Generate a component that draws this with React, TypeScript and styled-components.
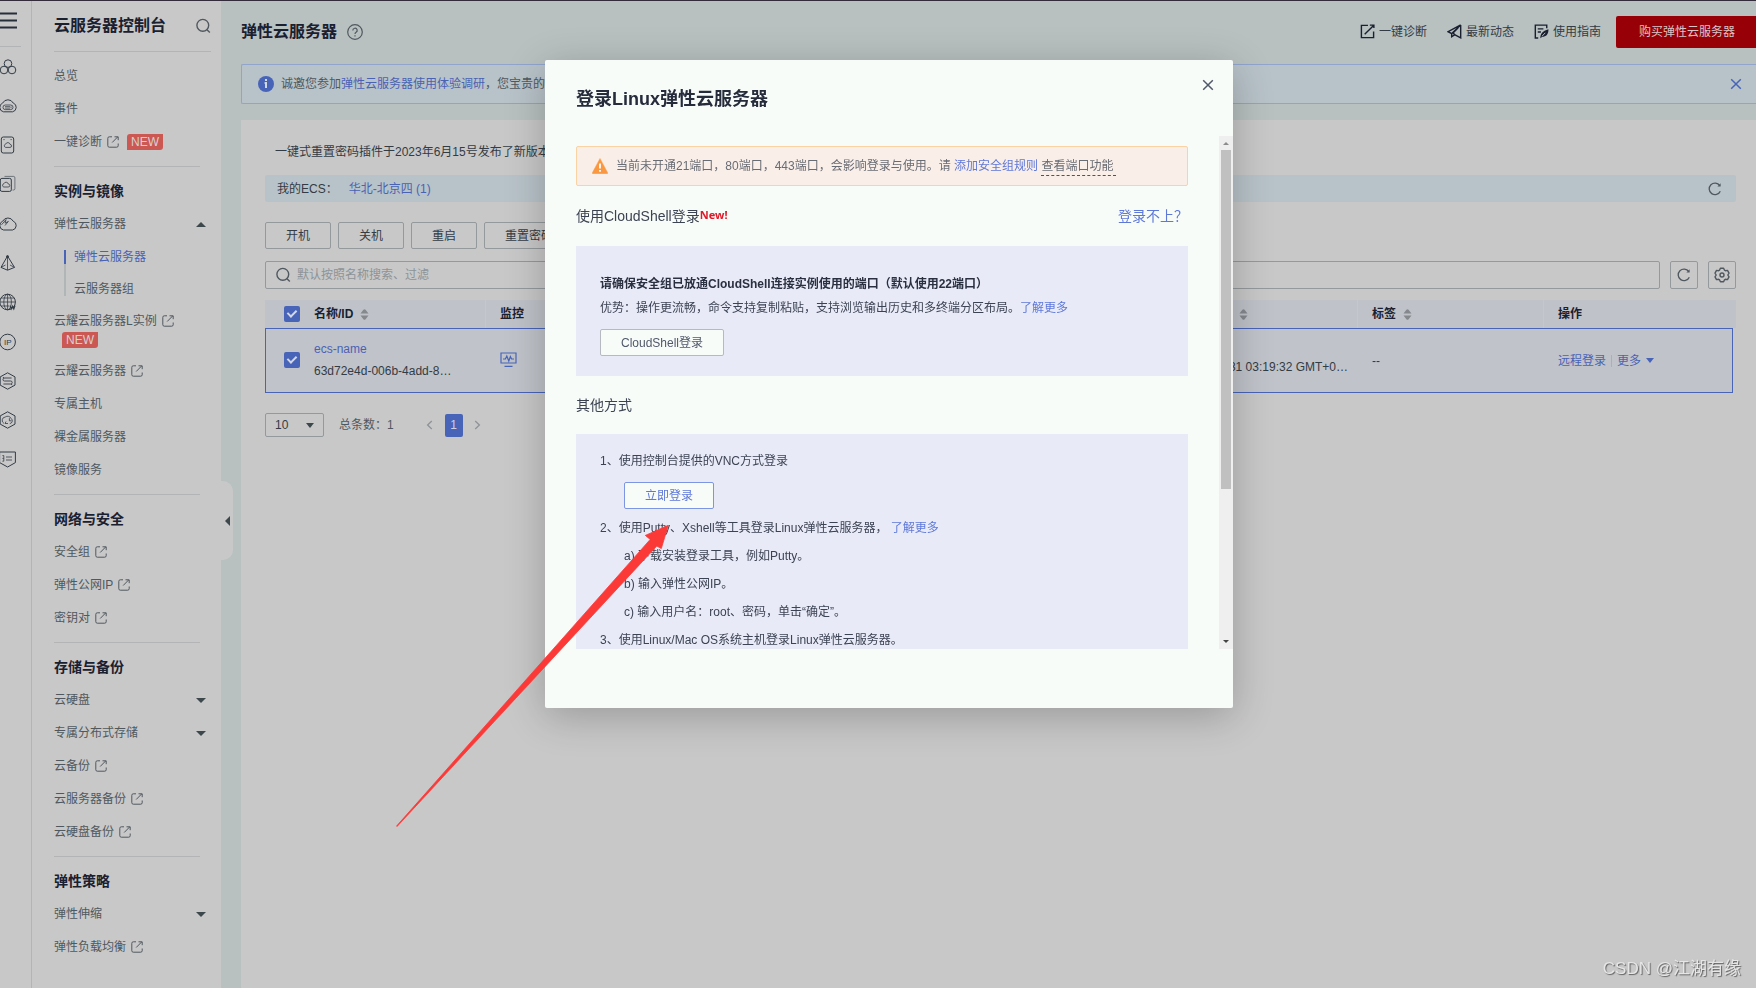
import React from 'react';
import styled, { createGlobalStyle } from 'styled-components';

const c = {
  surface: '#c8c8c8',
  page: '#b8c0c0',
  tint: '#b8c3c9',
  strong: '#1a2030',
  text: '#333b45',
  muted: '#50585f',
  faint: '#8d9397',
  line: '#b2b4b5',
  border: '#94999c',
  link: '#4a62b4',
  accent: '#4864b8',
  modal: '#f8fcf9',
  box: '#e8eaf8',
  modalText: '#3c4352',
  modalLink: '#5e78d8',
};

const GlobalStyle = createGlobalStyle`
  *, *::before, *::after { box-sizing: border-box; }
  body {
    margin: 0;
    background: ${c.surface};
    font: 12px/20px "Liberation Sans", "Noto Sans CJK SC", sans-serif;
    color: ${c.text};
  }
  button, input, select { font: inherit; color: inherit; margin: 0; }
  button { cursor: pointer; }
  a { text-decoration: none; color: inherit; }
  h1, h2, h3, p, ul, ol { margin: 0; padding: 0; font-size: inherit; font-weight: inherit; list-style: none; }
  svg { display: block; flex: none; }
`;

const Shell = styled.div`
  display: flex;
  min-height: 100vh;
  border-top: 1px solid #332b3a;
  overflow: hidden;
`;

/* ---------- icon rail ---------- */

const Rail = styled.nav`
  flex: none;
  width: 32px;
  border-right: 1px solid ${c.line};
`;

const IconButton = styled.button<{ $color?: string }>`
  display: flex;
  align-items: center;
  justify-content: center;
  padding: 0;
  border: 0;
  background: none;
  color: ${(p) => p.$color ?? c.muted};
`;

const MenuButton = styled(IconButton)`
  width: 21px;
  height: 46px;
  padding-bottom: 6px;
  justify-content: flex-start;
  border-bottom: 1px solid ${c.line};
`;

const RailList = styled.ul`
  display: grid;
  grid-auto-rows: 1fr;
  height: 432px;
  overflow: hidden;
`;

const RailLink = styled.a`
  display: flex;
  align-items: center;
  height: 100%;
  margin-left: -1px;
  color: #333c46;
`;

/* ---------- side navigation ---------- */

const Side = styled.aside`
  position: relative;
  flex: none;
  width: 189px;
  padding-left: 22px;
`;

const SideTitle = styled.header`
  display: flex;
  align-items: center;
  justify-content: space-between;
  height: 51px;
  margin-right: 10px;
  border-bottom: 1px solid ${c.line};
  color: ${c.strong};
  h1 { font-size: 16px; font-weight: bold; }
`;

const Section = styled.section`
  margin-right: 21px;
  padding: 8px 0 7px;
  & + & { border-top: 1px solid ${c.line}; }
`;

const SectionTitle = styled.h2`
  font-size: 14px;
  font-weight: bold;
  line-height: 33px;
  color: ${c.strong};
`;

const SideLink = styled.a`
  display: flex;
  flex-wrap: wrap;
  align-items: center;
  column-gap: 5px;
  line-height: 33px;
  color: ${c.muted};
  svg { margin-bottom: 2px; }
`;

const Caret = styled.span<{ $up?: boolean; $small?: boolean }>`
  margin-left: auto;
  margin-right: -6px;
  border: ${(p) => (p.$small ? 4 : 5)}px solid transparent;
  border-bottom-width: ${(p) => (p.$up ? 5 : 0)}px;
  border-top-width: ${(p) => (p.$up ? 0 : 5)}px;
  border-${(p) => (p.$up ? 'bottom' : 'top')}-color: #3c484c;
`;

const NewTag = styled.span<{ $below?: boolean }>`
  height: 16px;
  margin: ${(p) => (p.$below ? '-6px 0 7px 8px' : '0 0 2px 3px')};
  padding: 0 4px;
  border-radius: 3px 0 3px 0;
  background: #cc5854;
  color: #d8d0d0;
  line-height: 16px;
`;

const SubList = styled.ul`
  margin-left: 10px;
  padding: 0;
`;

const SubLink = styled.a<{ $active?: boolean }>`
  position: relative;
  display: block;
  padding-left: 10px;
  line-height: 32px;
  color: ${(p) => (p.$active ? c.link : c.muted)};
  &::before {
    content: '';
    position: absolute;
    left: 0;
    top: ${(p) => (p.$active ? 9 : -9)}px;
    bottom: 9px;
    width: 2px;
    background: ${(p) => (p.$active ? c.accent : '#b0b6b6')};
  }
`;

const Collapse = styled.button`
  position: absolute;
  z-index: 1;
  left: 100%;
  top: 480px;
  display: flex;
  align-items: center;
  width: 12px;
  height: 79px;
  padding: 0 0 0 4px;
  border: 0;
  border-radius: 0 10px 10px 0;
  background: ${c.surface};
  &::before {
    content: '';
    border: 5px solid transparent;
    border-left-width: 0;
    border-right-color: #3c484c;
  }
`;

/* ---------- main area ---------- */

const Main = styled.main`
  display: flex;
  flex: 1;
  flex-direction: column;
  min-width: 0;
  padding-left: 20px;
  background: ${c.page};
`;

const TopBar = styled.header`
  display: flex;
  align-items: center;
  height: 63px;
  padding-bottom: 2px;
  h2 { font-size: 16px; font-weight: bold; color: ${c.strong}; margin-right: 10px; }
`;

const TopLinks = styled.nav`
  display: flex;
  gap: 20px;
  margin-left: auto;
  margin-right: 15px;
`;

const TopLink = styled.a`
  display: flex;
  align-items: center;
  gap: 4px;
  color: ${c.text};
  svg { color: ${c.strong}; }
`;

const BuyButton = styled.button`
  width: 140px;
  height: 32px;
  padding: 0 0 0 23px;
  border: 0;
  border-radius: 2px 0 0 2px;
  background: #980008;
  color: #d8c4c6;
  text-align: left;
`;

const Notice = styled.div`
  display: flex;
  align-items: center;
  height: 40px;
  padding: 0 14px 0 16px;
  border: 1px solid #90a4cc;
  border-right: 0;
  border-radius: 2px 0 0 2px;
  background: ${c.tint};
  color: ${c.muted};
  white-space: nowrap;
  p { margin: 0 auto 0 7px; line-height: 20px; }
`;

const TextLink = styled.a<{ $modal?: boolean }>`
  color: ${(p) => (p.$modal ? c.modalLink : c.link)};
`;

const Panel = styled.section`
  flex: 1;
  margin-top: 16px;
  padding: 22px 20px 0 24px;
  background: ${c.surface};
`;

const Tip = styled.p`
  padding-left: 10px;
  line-height: 20px;
`;

const Region = styled.div`
  display: flex;
  align-items: center;
  gap: 11px;
  height: 27px;
  margin-top: 13px;
  padding: 0 14px 0 12px;
  border-radius: 2px;
  background: ${c.tint};
  button { margin-left: auto; }
`;

const Actions = styled.div`
  display: flex;
  gap: 7px;
  margin-top: 20px;
`;

const OutlineButton = styled.button`
  height: 27px;
  padding: 0 20px;
  border: 1px solid ${c.border};
  border-radius: 2px;
  background: none;
  white-space: nowrap;
  line-height: 24px;
`;

const SearchRow = styled.div`
  display: flex;
  gap: 10px;
  margin-top: 12px;
`;

const SearchBox = styled.label`
  display: flex;
  flex: 1;
  align-items: center;
  gap: 6px;
  height: 28px;
  padding-left: 9px;
  border: 1px solid ${c.border};
  border-radius: 2px;
  color: ${c.muted};
  input {
    flex: 1;
    padding: 0;
    border: 0;
    background: none;
    outline: 0;
  }
  input::placeholder { color: ${c.faint}; opacity: 1; }
`;

const SquareButton = styled(IconButton)`
  width: 28px;
  height: 28px;
  border: 1px solid ${c.border};
  border-radius: 2px;
`;

const TableWrap = styled.div`
  margin-top: 11px;
  padding-right: 3px;
`;

const Table = styled.table`
  width: 100%;
  table-layout: fixed;
  border-spacing: 0;
  text-align: left;
  white-space: nowrap;

  th, td { padding: 0 0 0 14px; overflow: hidden; }
  th:first-child, td:first-child { padding-left: 19px; }
  th:nth-child(2), td:nth-child(2) { padding-left: 0; }
  th {
    height: 28px;
    background: #bfc3c9;
    border-right: 1px solid #c5c8cb;
    font-weight: bold;
    color: ${c.strong};
  }
  th:first-child, th:last-child { border-right: 0; }
  th:last-child { box-shadow: 3px 0 #bfc3c9; overflow: visible; }
  tbody tr { background: #c0c4ca; outline: 1px solid ${c.accent}; outline-offset: -1px; }
  td { height: 65px; }
  td:nth-child(-n + 3) { padding-bottom: 2px; }
`;

const Col = styled.col<{ $w?: number }>`
  width: ${(p) => (p.$w ? `${p.$w}px` : 'auto')};
`;

const Check = styled.input`
  display: block;
  position: relative;
  appearance: none;
  width: 16px;
  height: 16px;
  border-radius: 2px;
  background: ${c.accent};
  &:checked::after {
    content: '';
    position: absolute;
    left: 5px;
    top: 2px;
    width: 6px;
    height: 9px;
    border: solid #d4d8e4;
    border-width: 0 2px 2px 0;
    transform: rotate(45deg);
  }
`;

const HeadCell = styled.span`
  display: flex;
  align-items: center;
  gap: 7px;
`;

const NameCell = styled.div`
  line-height: 22px;
`;

const TimeCell = styled.div`
  margin-left: -14px;
  padding: 12px 10px 0 0;
  text-align: right;
`;

const OpCell = styled.div`
  display: flex;
  align-items: center;
  gap: 5px;
  color: ${c.link};
  i { width: 1px; height: 12px; background: #acb0b5; }
  span { margin: 0; border-top-color: ${c.accent}; }
`;

const Pager = styled.div`
  display: flex;
  align-items: center;
  margin-top: 20px;
  color: ${c.muted};
`;

const PageSize = styled.label`
  display: flex;
  align-items: center;
  width: 59px;
  height: 24px;
  margin-right: 15px;
  border: 1px solid ${c.border};
  border-radius: 2px;
  color: ${c.text};
  select {
    appearance: none;
    flex: 1;
    height: 22px;
    min-width: 0;
    padding: 0 0 0 9px;
    border: 0;
    background: none;
    outline: 0;
  }
  span { margin: 0 9px 0 0; pointer-events: none; }
`;

const PageNav = styled.nav`
  display: flex;
  align-items: center;
  gap: 10px;
  margin-left: 31px;
`;

const PageNumber = styled.button`
  width: 18px;
  height: 23px;
  padding: 0;
  border: 0;
  border-radius: 2px;
  background: ${c.accent};
  color: #c8d0e4;
`;

/* ---------- dialog ---------- */

const Backdrop = styled.div`
  position: fixed;
  inset: 0;
  z-index: 2;
  display: flex;
  align-items: flex-start;
  justify-content: center;
  padding: 60px 0 0 22px;
`;

const Dialog = styled.section`
  width: 688px;
  padding-bottom: 59px;
  border-radius: 2px;
  background: ${c.modal};
  box-shadow: 0 8px 40px rgba(0, 0, 0, 0.24);
  color: ${c.modalText};
`;

const DialogHead = styled.header`
  display: flex;
  align-items: flex-start;
  justify-content: space-between;
  height: 76px;
  padding: 19px 19px 0 31px;
  h2 { padding-top: 8px; font-size: 18px; line-height: 24px; font-weight: bold; color: #262c3c; }
`;

const DialogBody = styled.div`
  display: flex;
  height: 513px;
`;

const Scroller = styled.div`
  flex: 1;
  min-width: 0;
  padding: 10px 31px 0;
  overflow: hidden;
`;

const ScrollBar = styled.div`
  display: flex;
  flex-direction: column;
  align-items: center;
  width: 14px;
  padding: 6px 0;
  background: #efefef;
`;

const ScrollArrow = styled.span<{ $down?: boolean }>`
  border: 3px solid transparent;
  border-bottom-width: ${(p) => (p.$down ? 0 : 3)}px;
  border-top-width: ${(p) => (p.$down ? 3 : 0)}px;
  border-bottom-color: #8c8c8c;
  border-top-color: #444;
  margin-top: ${(p) => (p.$down ? 'auto' : 0)};
`;

const Thumb = styled.div`
  width: 10px;
  height: 339px;
  margin-top: 5px;
  background: #c0c0c0;
`;

const Warning = styled.div`
  display: flex;
  align-items: center;
  gap: 8px;
  height: 40px;
  padding-left: 15px;
  border: 1px solid #fbd2a4;
  border-radius: 2px;
  background: #f9eee8;
  color: #686c74;
  white-space: nowrap;
`;

const PortHelp = styled.a`
  padding: 0 3px 2px 0;
  border-bottom: 1px dashed #4a5468;
`;

const GroupTitle = styled.div<{ $h: number }>`
  display: flex;
  align-items: center;
  height: ${(p) => p.$h}px;
  font-size: 14px;
  h3 { line-height: 20px; }
  a { margin-left: auto; }
`;

const NewMark = styled.strong`
  margin-bottom: 3px;
  font: bold 11px/14px "Noto Sans", sans-serif;
  color: #e01828;
`;

const Box = styled.div<{ $lead: number; $top: number }>`
  padding: ${(p) => p.$top}px 24px 20px;
  background: ${c.box};
  line-height: ${(p) => p.$lead}px;
  white-space: nowrap;
  strong { color: #2a3040; }
`;

const Steps = styled.ol`
  padding-left: 24px;
`;

const DialogButton = styled.button<{ $primary?: boolean }>`
  display: block;
  height: 27px;
  margin: ${(p) => (p.$primary ? '7px 0 5px 24px' : '9px 0 0')};
  padding: 0 20px;
  border: 1px solid ${(p) => (p.$primary ? '#7c96e4' : '#b6bac0')};
  border-radius: 2px;
  background: ${c.modal};
  color: ${(p) => (p.$primary ? c.modalLink : '#50586a')};
  line-height: 24px;
`;

const ArrowOverlay = styled.svg`
  position: fixed;
  z-index: 3;
  left: calc(50% - 482px);
  top: 525px;
  pointer-events: none;
`;

const Watermark = styled.div`
  position: fixed;
  right: 15px;
  bottom: 7px;
  z-index: 3;
  font-size: 17px;
  line-height: 24px;
  color: #e6e6e6;
  text-shadow: 1px 1px 1px #606060;
`;

/* ---------- icons ---------- */

type IconProps = { size?: number; w?: number; box?: number; children: React.ReactNode };
const Icon = ({ size = 16, w = 1, box = 16, children }: IconProps) => (
  <svg width={size} height={size} viewBox={`0 0 ${box} ${box}`} fill="none" stroke="currentColor" strokeWidth={w} aria-hidden="true">
    {children}
  </svg>
);

const SearchIcon = () => (
  <Icon w={1.4}>
    <circle cx="7.8" cy="7.3" r="5.9" />
    <path d="M12 11.7 14.8 14.5" />
  </Icon>
);
const ExternalIcon = () => (
  <Icon size={12} box={12}>
    <path d="M5 .8H2.3A1.5 1.5 0 0 0 .8 2.3v7.4a1.5 1.5 0 0 0 1.5 1.5h7.4a1.5 1.5 0 0 0 1.5-1.5V7.5M5.2 6.5 10.6 1M7.5.8h3.7v3.4" />
  </Icon>
);
const RefreshIcon = () => (
  <Icon size={14} box={14} w={1.3}>
    <path d="M12.3 9.2A5.8 5.8 0 1 1 11.8 3.6" />
    <path d="M12.6 1.2V4.6H9.4Z" fill="currentColor" stroke="none" />
  </Icon>
);
const CloseIcon = () => (
  <Icon size={12} box={12} w={1.5}>
    <path d="M1.2 1.2 10.8 10.8M10.8 1.2 1.2 10.8" />
  </Icon>
);
const SortIcon = () => (
  <svg width="9" height="11" viewBox="0 0 9 11" fill="#85898e" aria-hidden="true">
    <path d="M.5 4.6 3.4.8Q4.5-.2 5.6.8L8.5 4.6ZM.5 6.4 3.4 10.2Q4.5 11.2 5.6 10.2L8.5 6.4Z" />
  </svg>
);
const Cloudlet = ({ x, y }: { x: number; y: number }) => (
  <path d={`M${x} ${y}h4.4a1.5 1.5 0 0 0 .1-3 2.3 2.3 0 0 0-4.4-.3A1.7 1.7 0 0 0 ${x} ${y}Z`} strokeWidth=".8" />
);

const railIcons: [string, React.ReactNode][] = [
  ['服务列表', <><circle cx="9" cy="5.6" r="3.8" /><circle cx="5" cy="12" r="3.8" /><circle cx="13" cy="12" r="3.8" /></>],
  ['云服务器', <><path d="M4.5 14.8A4.6 4.6 0 0 1 3.7 6 5.9 5.9 0 0 1 14.2 6 4.6 4.6 0 0 1 13.6 14.8Z" /><rect x="4" y="8" width="10" height="4.6" rx="2.3" strokeWidth=".8" /><path d="M6 9.6h5M6 11.1h5M12 9.4v1.8" strokeWidth=".7" /></>],
  ['裸金属', <><rect x="2.3" y="1" width="12.4" height="16" rx="2" /><Cloudlet x={6.6} y={11.4} /><path d="M4.5 3.6h1M11.6 3.6h1" /></>],
  ['镜像', <><rect x="1.3" y="3.4" width="11" height="13" rx="1.6" /><path d="M5.5 1.4h9a1.4 1.4 0 0 1 1.4 1.4v10.8a1.4 1.4 0 0 1-1.4 1.4h-1" opacity=".6" /><Cloudlet x={4.8} y={12} /></>],
  ['函数', <><path d="M4.5 15A4.6 4.6 0 0 1 3.7 6.2 5.9 5.9 0 0 1 14.2 6.2 4.6 4.6 0 0 1 13.6 15Z" /><path d="M2.5 9.8 7 4.6 6 8.2 9.4 6.4 6 10.5" strokeWidth=".8" /></>],
  ['网络', <><path d="M8.5 2 2 13.4 8.5 16.2 15.5 13.4Z" /><path d="M8.5 2V16M2 13.4 6.5 11M15.5 13.4 11 11" strokeWidth=".8" /><circle cx="8.5" cy="2.6" r="1" fill="currentColor" /></>],
  ['域名', <><circle cx="8.6" cy="9" r="7.8" /><ellipse cx="8.6" cy="9" rx="3.8" ry="7.8" strokeWidth=".8" /><path d="M.9 9h15.4M2 5h13.2M2 13h8M8.6 1.2v15.6" strokeWidth=".8" /><path d="M11 12.5l1.2 3.5 1.3-2.8 1.3 2.8 1.2-3.5" strokeWidth="1.2" /></>],
  ['公网', <><circle cx="8.6" cy="9" r="7.8" /><text x="8.8" y="12" fontSize="8" textAnchor="middle" fill="currentColor" stroke="none">IP</text></>],
  ['路由', <><path d="M8.6.8 16 4.9v8.2L8.6 17.2 1.2 13.1V4.9Z" /><path d="M12.6 6H5.5a1.4 1.4 0 0 0 0 3h6.2a1.5 1.5 0 0 1 0 3H4.4M5 6.2 4 5M12.2 12l1 1.2" strokeWidth=".9" /></>],
  ['容器', <><path d="M8.6.8 16 4.9v8.2L8.6 17.2 1.2 13.1V4.9Z" /><path d="M5 12.4A3.4 3.4 0 0 1 6.2 6a4 4 0 0 1 6 1.6 2.8 2.8 0 0 1-1.4 5M7 10.5l-1 2h3M10.4 7.2v2.6h2" strokeWidth=".8" /></>],
  ['订单', <><path d="M.6 2h15.8v10.6L8.6 17 .6 12.6Z" /><path d="M7 7h6M7 10h6M3.4 5.6h1.4v5.6H3.4M3.4 8.4h1.4" strokeWidth=".8" /></>],
];

const ExternalLink = ({ children, tag }: { children: string; tag?: 'side' | 'below' }) => (
  <SideLink href="#">
    {children}
    <ExternalIcon />
    {tag && <NewTag $below={tag === 'below'}>NEW</NewTag>}
  </SideLink>
);

export default function App() {
  return (
    <>
      <GlobalStyle />
      <Shell>
        <Rail>
          <MenuButton aria-label="菜单">
            <svg width="17" height="17" viewBox="0 0 17 17" stroke="#262e3a" strokeWidth="2" aria-hidden="true">
              <path d="M0 1.5H17M0 8.5H17M0 15.5H17" />
            </svg>
          </MenuButton>
          <RailList>
            {railIcons.map(([name, art]) => (
              <li key={name}>
                <RailLink href="#" aria-label={name}>
                  <Icon size={18} box={18}>{art}</Icon>
                </RailLink>
              </li>
            ))}
          </RailList>
        </Rail>

        <Side>
          <SideTitle>
            <h1>云服务器控制台</h1>
            <IconButton aria-label="搜索"><SearchIcon /></IconButton>
          </SideTitle>
          <Section>
            <SideLink href="#">总览</SideLink>
            <SideLink href="#">事件</SideLink>
            <ExternalLink tag="side">一键诊断</ExternalLink>
          </Section>
          <Section>
            <SectionTitle>实例与镜像</SectionTitle>
            <SideLink href="#">弹性云服务器<Caret $up /></SideLink>
            <SubList>
              <li><SubLink href="#" $active>弹性云服务器</SubLink></li>
              <li><SubLink href="#">云服务器组</SubLink></li>
            </SubList>
            <ExternalLink tag="below">云耀云服务器L实例</ExternalLink>
            <ExternalLink>云耀云服务器</ExternalLink>
            <SideLink href="#">专属主机</SideLink>
            <SideLink href="#">裸金属服务器</SideLink>
            <SideLink href="#">镜像服务</SideLink>
          </Section>
          <Section>
            <SectionTitle>网络与安全</SectionTitle>
            <ExternalLink>安全组</ExternalLink>
            <ExternalLink>弹性公网IP</ExternalLink>
            <ExternalLink>密钥对</ExternalLink>
          </Section>
          <Section>
            <SectionTitle>存储与备份</SectionTitle>
            <SideLink href="#">云硬盘<Caret /></SideLink>
            <SideLink href="#">专属分布式存储<Caret /></SideLink>
            <ExternalLink>云备份</ExternalLink>
            <ExternalLink>云服务器备份</ExternalLink>
            <ExternalLink>云硬盘备份</ExternalLink>
          </Section>
          <Section>
            <SectionTitle>弹性策略</SectionTitle>
            <SideLink href="#">弹性伸缩<Caret /></SideLink>
            <ExternalLink>弹性负载均衡</ExternalLink>
          </Section>
          <Collapse aria-label="收起" />
        </Side>

        <Main>
          <TopBar>
            <h2>弹性云服务器</h2>
            <IconButton aria-label="帮助">
              <Icon w={1.2}>
                <circle cx="8" cy="8" r="7.3" />
                <path d="M5.8 6.4a2.2 2.2 0 1 1 3.3 1.9C8.3 8.8 8 9.1 8 10M8 11.2v1.2" />
              </Icon>
            </IconButton>
            <TopLinks>
              <TopLink href="#">
                <Icon size={15} w={1.5}>
                  <path d="M8.5 1.5H1.5v13h13V8M5 11 14.5 1.5M10.5 1.2h4.3v3" />
                </Icon>
                一键诊断
              </TopLink>
              <TopLink href="#">
                <Icon size={15} w={1.5}>
                  <path d="M14.6 1 1.2 8.2 5 10.2M14.6 1V14.8L8.6 11.6M14.6 1 5 10.2V13.6L8.4 11.4 6.4 9.6 12 4" />
                </Icon>
                最新动态
              </TopLink>
              <TopLink href="#">
                <Icon size={15} w={1.5}>
                  <path d="M4.5 15H1.4V1.2H13.6V4.4M4 5.2h6M4 8.6h3.4" />
                  <path d="M6.8 15.2C6.6 10.6 9 7.4 15.4 5.6 15.6 11 13 13.6 8.8 13.6Z" fill="currentColor" stroke="none" />
                  <path d="M8.6 13 12 9.4" stroke={c.page} strokeWidth="1" />
                </Icon>
                使用指南
              </TopLink>
            </TopLinks>
            <BuyButton>购买弹性云服务器</BuyButton>
          </TopBar>

          <Notice>
            <svg width="16" height="16" viewBox="0 0 16 16" aria-hidden="true">
              <circle cx="8" cy="8" r="8" fill={c.accent} />
              <path d="M8 3v2M6.6 7H8v5" stroke="#d0d8e4" strokeWidth="2" fill="none" />
            </svg>
            <p>
              诚邀您参加<TextLink href="#">弹性云服务器使用体验调研</TextLink>，您宝贵的意
            </p>
            <IconButton $color={c.accent} aria-label="关闭提示"><CloseIcon /></IconButton>
          </Notice>

          <Panel>
            <Tip>一键式重置密码插件于2023年6月15号发布了新版本</Tip>
            <Region>
              <span>我的ECS：</span>
              <TextLink href="#">华北-北京四 (1)</TextLink>
              <IconButton aria-label="刷新区域"><RefreshIcon /></IconButton>
            </Region>
            <Actions>
              <OutlineButton>开机</OutlineButton>
              <OutlineButton>关机</OutlineButton>
              <OutlineButton>重启</OutlineButton>
              <OutlineButton>重置密码</OutlineButton>
            </Actions>
            <SearchRow>
              <SearchBox>
                <SearchIcon />
                <input type="text" aria-label="搜索" placeholder="默认按照名称搜索、过滤" />
              </SearchBox>
              <SquareButton aria-label="刷新"><RefreshIcon /></SquareButton>
              <SquareButton aria-label="设置">
                <Icon w={1.4}>
                  <path d="M6.4 1.2h3.2l.8 1.9 1 .6 2.1-.3 1.5 2.7L13.8 8l1.2 1.9-1.5 2.7-2.1-.3-1 .6-.8 1.9H6.4l-.8-1.9-1-.6-2.1.3L1 9.9 2.2 8 1 6.1l1.5-2.7 2.1.3 1-.6Z" strokeLinejoin="round" />
                  <circle cx="8" cy="8" r="2" />
                </Icon>
              </SquareButton>
            </SearchRow>

            <TableWrap>
              <Table>
                <colgroup>
                  <Col $w={49} />
                  <Col $w={172} />
                  <Col $w={90} />
                  <Col />
                  <Col $w={133} />
                  <Col $w={186} />
                  <Col $w={189} />
                </colgroup>
                <thead>
                  <tr>
                    <th><Check type="checkbox" defaultChecked aria-label="全选" /></th>
                    <th><HeadCell>名称/ID<SortIcon /></HeadCell></th>
                    <th>监控</th>
                    <th />
                    <th><SortIcon /></th>
                    <th><HeadCell>标签<SortIcon /></HeadCell></th>
                    <th>操作</th>
                  </tr>
                </thead>
                <tbody>
                  <tr>
                    <td><Check type="checkbox" defaultChecked aria-label="ecs-name" /></td>
                    <td>
                      <NameCell>
                        <TextLink href="#">ecs-name</TextLink>
                        <div>63d72e4d-006b-4add-8…</div>
                      </NameCell>
                    </td>
                    <td>
                      <IconButton $color={c.accent} aria-label="监控">
                        <Icon size={17} box={17} w={1.2}>
                          <path d="M1 2h15v10H1ZM4.5 15.4h8M3 8h2.4l1.4-3 2 5 1.6-4.4L11.6 8H14" />
                        </Icon>
                      </IconButton>
                    </td>
                    <td />
                    <td><TimeCell>31 03:19:32 GMT+0…</TimeCell></td>
                    <td>--</td>
                    <td>
                      <OpCell>
                        <TextLink href="#">远程登录</TextLink>
                        <i />
                        <TextLink href="#">更多</TextLink>
                        <Caret $small />
                      </OpCell>
                    </td>
                  </tr>
                </tbody>
              </Table>
            </TableWrap>

            <Pager>
              <PageSize>
                <select aria-label="每页条数" defaultValue="10">
                  <option>10</option>
                </select>
                <Caret $small />
              </PageSize>
              总条数：1
              <PageNav>
                <IconButton $color={c.faint} aria-label="上一页">
                  <Icon size={10} box={10} w={1.3}><path d="M6.8 1 2.6 5 6.8 9" /></Icon>
                </IconButton>
                <PageNumber>1</PageNumber>
                <IconButton $color={c.faint} aria-label="下一页">
                  <Icon size={10} box={10} w={1.3}><path d="M2.2 1 6.4 5 2.2 9" /></Icon>
                </IconButton>
              </PageNav>
            </Pager>
          </Panel>
        </Main>
      </Shell>

      <Backdrop>
        <Dialog role="dialog" aria-labelledby="login-title">
          <DialogHead>
            <h2 id="login-title">登录Linux弹性云服务器</h2>
            <IconButton $color="#50586a" aria-label="关闭"><CloseIcon /></IconButton>
          </DialogHead>
          <DialogBody>
            <Scroller>
              <Warning>
                <svg width="16" height="16" viewBox="0 0 16 16" aria-hidden="true">
                  <path d="M8 .4 15.8 15Q16 15.8 15 15.8H1Q0 15.8.2 15Z" fill="#fa9841" stroke="#fa9841" strokeLinejoin="round" strokeWidth=".4" />
                  <path d="M8 5.4v5M8 12v1.8" stroke="#fff" strokeWidth="1.8" />
                </svg>
                <span>
                  当前未开通21端口，80端口，443端口，会影响登录与使用。请{' '}
                  <TextLink $modal href="#">添加安全组规则</TextLink>{' '}
                  <PortHelp href="#">查看端口功能</PortHelp>
                </span>
              </Warning>

              <GroupTitle $h={60}>
                <h3>使用CloudShell登录</h3>
                <NewMark>New!</NewMark>
                <TextLink $modal href="#">登录不上？</TextLink>
              </GroupTitle>
              <Box $top={26} $lead={24}>
                <strong>请确保安全组已放通CloudShell连接实例使用的端口（默认使用22端口）</strong>
                <p>
                  优势：操作更流畅，命令支持复制粘贴，支持浏览输出历史和多终端分区布局。
                  <TextLink $modal href="#">了解更多</TextLink>
                </p>
                <DialogButton>CloudShell登录</DialogButton>
              </Box>

              <GroupTitle $h={58}>
                <h3>其他方式</h3>
              </GroupTitle>
              <Box $top={13} $lead={28}>
                <p>1、使用控制台提供的VNC方式登录</p>
                <DialogButton $primary>立即登录</DialogButton>
                <p>
                  2、使用Putty、Xshell等工具登录Linux弹性云服务器，{' '}
                  <TextLink $modal href="#">了解更多</TextLink>
                </p>
                <Steps>
                  <li>a) 下载安装登录工具，例如Putty。</li>
                  <li>b) 输入弹性公网IP。</li>
                  <li>c) 输入用户名：root、密码，单击“确定”。</li>
                </Steps>
                <p>3、使用Linux/Mac OS系统主机登录Linux弹性云服务器。</p>
              </Box>
            </Scroller>
            <ScrollBar aria-hidden="true">
              <ScrollArrow />
              <Thumb />
              <ScrollArrow $down />
            </ScrollBar>
          </DialogBody>
        </Dialog>
      </Backdrop>

      <ArrowOverlay width="274" height="303" viewBox="0 0 274 303" aria-hidden="true">
        <path d="M272.3.3 265.3 23.6 260.8 21 1 301.5.6 301 254.2 14.4 249.3 10.4Z" fill="#fb3a38" stroke="#fb3a38" strokeWidth=".8" />
      </ArrowOverlay>
      <Watermark>CSDN @江湖有缘</Watermark>
    </>
  );
}
